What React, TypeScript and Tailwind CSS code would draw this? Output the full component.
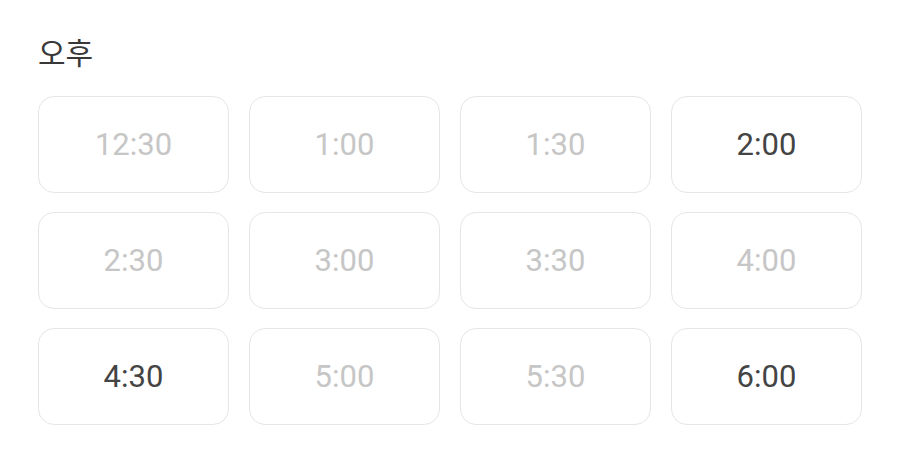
import React from "react";

const slots: { t: string; on: boolean }[] = [
  { t: "12:30", on: false },
  { t: "1:00", on: false },
  { t: "1:30", on: false },
  { t: "2:00", on: true },
  { t: "2:30", on: false },
  { t: "3:00", on: false },
  { t: "3:30", on: false },
  { t: "4:00", on: false },
  { t: "4:30", on: true },
  { t: "5:00", on: false },
  { t: "5:30", on: false },
  { t: "6:00", on: true },
];

export default function App() {
  return (
    <div
      className="w-[900px] h-[464px] bg-white px-[38px] pt-[34px]"
      style={{ fontFamily: "Roboto, 'Noto Sans CJK KR', sans-serif" }}
    >
      <div className="text-[30px] leading-[40px] text-[#383838] mb-[22px]">오후</div>
      <div className="grid grid-cols-4 gap-x-[20px] gap-y-[19px] w-[824px]">
        {slots.map((s) => (
          <div
            key={s.t}
            className={`h-[97px] pt-[2px] rounded-[16px] border-[1.5px] border-[#e6e6e6] flex items-center justify-center text-[31px] ${
              s.on ? "text-[#444444]" : "text-[#c6c6c6]"
            }`}
          >
            {s.t}
          </div>
        ))}
      </div>
    </div>
  );
}
